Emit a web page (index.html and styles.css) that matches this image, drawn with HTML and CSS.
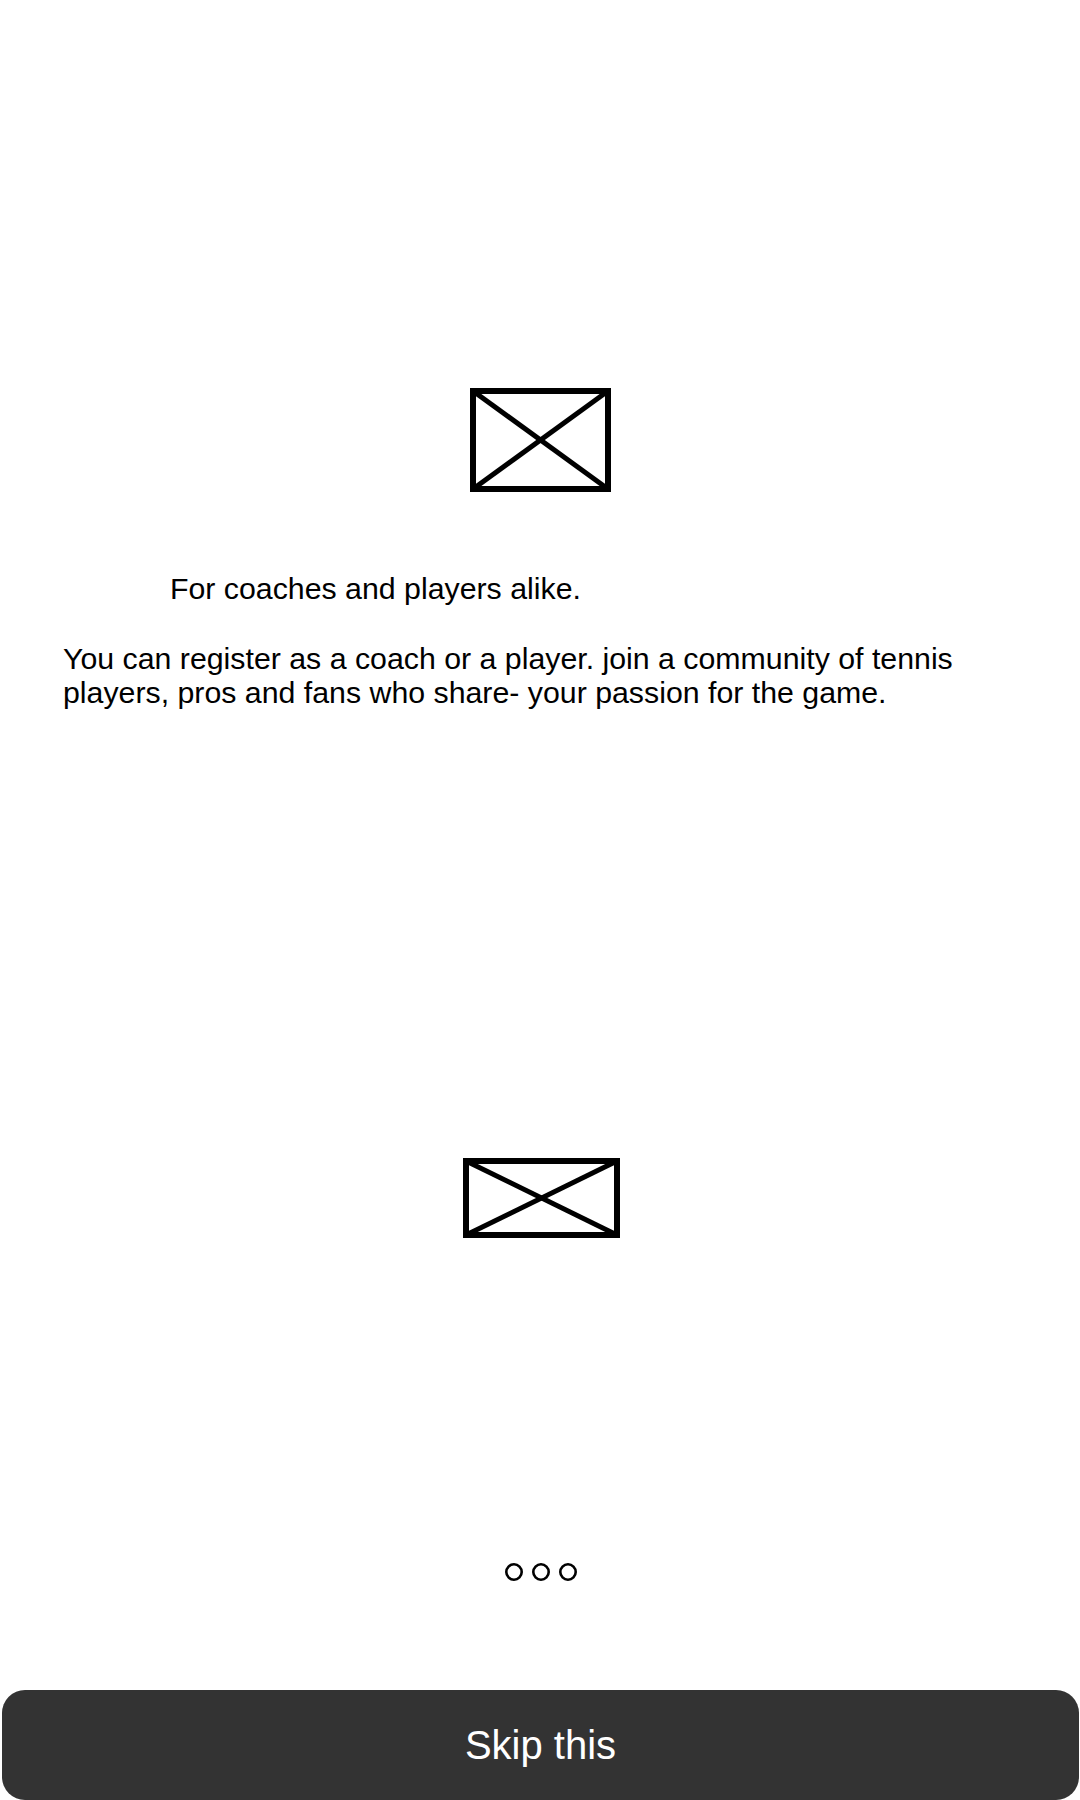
FILE: index.html
```html
<!DOCTYPE html>
<html lang="en">
<head>
<meta charset="utf-8">
<title>Onboarding</title>
<link rel="stylesheet" href="styles.css">
</head>
<body>
<main class="screen">
  <div class="hero">
    <svg class="placeholder ph-top" width="141" height="104" viewBox="0 0 141 104" aria-hidden="true">
      <rect x="3" y="3" width="135" height="98" fill="none" stroke="#000" stroke-width="6"/>
      <line x1="3" y1="3" x2="138" y2="101" stroke="#000" stroke-width="5"/>
      <line x1="138" y1="3" x2="3" y2="101" stroke="#000" stroke-width="5"/>
    </svg>
  </div>
  <h1 class="title">For coaches and players alike.</h1>
  <p class="desc">You can register as a coach or a player. join a community of tennis players, pros and fans who share- your passion for the game.</p>
  <div class="hero">
    <svg class="placeholder ph-bottom" width="157" height="80" viewBox="0 0 157 80" aria-hidden="true">
      <rect x="3" y="3" width="151" height="74" fill="none" stroke="#000" stroke-width="6"/>
      <line x1="3" y1="3" x2="154" y2="77" stroke="#000" stroke-width="5"/>
      <line x1="154" y1="3" x2="3" y2="77" stroke="#000" stroke-width="5"/>
    </svg>
  </div>
  <div class="dots">
    <svg width="18" height="18" viewBox="0 0 18 18"><circle cx="9" cy="9" r="7.7" fill="none" stroke="#000" stroke-width="2.6"/></svg>
    <svg width="18" height="18" viewBox="0 0 18 18"><circle cx="9" cy="9" r="7.7" fill="none" stroke="#000" stroke-width="2.6"/></svg>
    <svg width="18" height="18" viewBox="0 0 18 18"><circle cx="9" cy="9" r="7.7" fill="none" stroke="#000" stroke-width="2.6"/></svg>
  </div>
  <button class="skip" type="button">Skip this</button>
</main>
</body>
</html>
```
FILE: styles.css
```css
html, body {
  margin: 0;
  padding: 0;
  background: #ffffff;
}

.screen {
  width: 1080px;
  height: 1800px;
  display: flex;
  flex-direction: column;
  font-family: "Liberation Sans", Arial, sans-serif;
  color: #000;
  overflow: hidden;
}

.hero {
  display: flex;
  justify-content: center;
}

.placeholder {
  display: block;
}

.ph-top {
  margin-top: 388px;
  margin-left: 1px;
}

.ph-bottom {
  margin-top: 448px;
  margin-left: 3px;
}

.title {
  margin: 80px 0 0 170px;
  font-size: 30.3px;
  font-weight: normal;
  line-height: 34px;
}

.desc {
  margin: 36px 63px 0 63px;
  font-size: 30.3px;
  line-height: 34px;
}

.dots {
  margin-top: 325px;
  display: flex;
  justify-content: center;
  gap: 9px;
  padding-left: 1px;
}

.dots svg {
  display: block;
}

.skip {
  margin: 109px 0 0 2px;
  width: 1077px;
  height: 110px;
  border: none;
  border-radius: 23px;
  background: #333333;
  color: #ffffff;
  font-family: "Liberation Sans", Arial, sans-serif;
  font-size: 40px;
  padding: 0;
  flex-shrink: 0;
}
```
